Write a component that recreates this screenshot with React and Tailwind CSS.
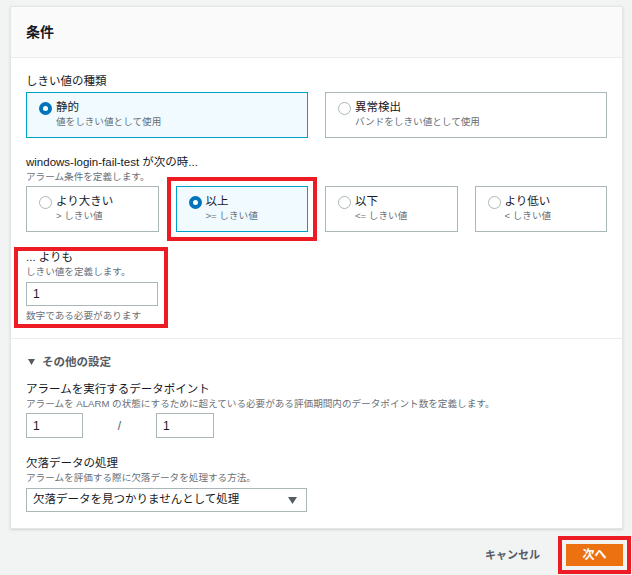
import React from 'react';

// --- Radio dot used in the tiles ---
const Radio = ({ checked }) =>
    checked ? (
        <span className="mt-[3px] flex h-[13px] w-[13px] shrink-0 items-center justify-center rounded-full bg-[#0073bb]">
            <span className="h-[5px] w-[5px] rounded-full bg-white"></span>
        </span>
    ) : (
        <span className="mt-[3px] h-[13px] w-[13px] shrink-0 rounded-full border border-[#aab7b8] bg-white"></span>
    );

// --- Selectable tile ---
const Tile = ({ title, sub, checked, highlight }) => (
    <div
        className={
            'flex h-[46px] items-start gap-[4px] border pl-[12px] pt-[6px] ' +
            (checked ? 'border-[#00a1c9] bg-[#f1faff] ' : 'border-[#aab7b8] bg-white ') +
            (highlight ? 'outline-4 outline-[#ed1c24] outline-offset-[5px]' : '')
        }
    >
        <Radio checked={checked} />
        <div>
            <p className="text-[11.5px] leading-[16px] text-[#16191f]">{title}</p>
            <p className="text-[9.6px] leading-[13px] text-[#687078]">{sub}</p>
        </div>
    </div>
);

const Label = ({ title, sub }) => (
    <div>
        <p className="text-[11.5px] leading-[16px] text-[#16191f]">{title}</p>
        {sub && <p className="text-[9.6px] leading-[13px] text-[#687078]">{sub}</p>}
    </div>
);

const Input = ({ value, className }) => (
    <div className={'flex items-center border border-[#aab7b8] bg-white px-[6px] text-[12px] text-[#16191f] ' + className}>
        {value}
    </div>
);

const App = () => {
    const operators = [
        { title: 'より大きい', sub: '> しきい値' },
        { title: '以上', sub: '>= しきい値', checked: true, highlight: true },
        { title: '以下', sub: '<= しきい値' },
        { title: 'より低い', sub: '< しきい値' },
    ];

    return (
        <div
            className="min-h-[575px] w-[632px] bg-[#f2f3f3] pt-[6px]"
            style={{ fontFamily: '"Liberation Sans", "Noto Sans CJK JP", sans-serif' }}
        >
            <div className="ml-[10px] w-[613px] border border-[#e3e6e6] bg-white shadow-sm">
                <header className="flex h-[51px] items-center border-b border-[#eaeded] bg-[#fafafa] px-[15px]">
                    <h2 className="text-[14px] font-bold text-[#16191f]">条件</h2>
                </header>

                {/* threshold section */}
                <div className="border-b border-[#eaeded] px-[15px] pb-[16px] pt-[14px]">
                    <p className="text-[11.5px] leading-[18px] text-[#16191f]">しきい値の種類</p>
                    <div className="mt-[2px] grid grid-cols-2 gap-[17px]">
                        <Tile title="静的" sub="値をしきい値として使用" checked />
                        <Tile title="異常検出" sub="バンドをしきい値として使用" />
                    </div>

                    <div className="mt-[16px]">
                        <Label title="windows-login-fail-test が次の時..." sub="アラーム条件を定義します。" />
                    </div>
                    <div className="mt-[3px] grid grid-cols-4 gap-[17px]">
                        {operators.map(op => (
                            <Tile key={op.title} {...op} />
                        ))}
                    </div>

                    <div className="relative mt-[17px] w-[132px]">
                        <span className="pointer-events-none absolute -bottom-[6px] -left-[12px] -right-[10px] -top-[2px] border-4 border-[#ed1c24]"></span>
                        <Label title="... よりも" sub="しきい値を定義します。" />
                        <Input value="1" className="mt-[4px] h-[24px] w-[132px]" />
                        <p className="mt-[3px] text-[9.6px] leading-[13px] text-[#687078]">数字である必要があります</p>
                    </div>
                </div>

                {/* additional settings */}
                <div className="px-[15px] pb-[16px] pt-[15px]">
                    <div className="flex items-center gap-[7px] pl-[2px]">
                        <svg width="7" height="6" viewBox="0 0 7 6">
                            <polygon points="0,0 7,0 3.5,6" fill="#545b64" />
                        </svg>
                        <span className="text-[11.5px] font-bold leading-[16px] text-[#545b64]">その他の設定</span>
                    </div>

                    <div className="mt-[11px]">
                        <Label
                            title="アラームを実行するデータポイント"
                            sub="アラームを ALARM の状態にするために超えている必要がある評価期間内のデータポイント数を定義します。"
                        />
                    </div>
                    <div className="mt-[3px] flex items-center">
                        <Input value="1" className="h-[25px] w-[57px]" />
                        <span className="w-[73px] text-center text-[12px] text-[#545b64]">/</span>
                        <Input value="1" className="h-[25px] w-[58px]" />
                    </div>

                    <div className="mt-[17px]">
                        <Label title="欠落データの処理" sub="アラームを評価する際に欠落データを処理する方法。" />
                    </div>
                    <div className="mt-[4px] flex h-[24px] w-[281px] items-center justify-between border border-[#aab7b8] bg-white pl-[6px] pr-[9px]">
                        <span className="text-[11.5px] text-[#16191f]">欠落データを見つかりませんとして処理</span>
                        <svg width="9" height="7" viewBox="0 0 9 7">
                            <polygon points="0,0 9,0 4.5,7" fill="#545b64" />
                        </svg>
                    </div>
                </div>
            </div>

            <footer className="mt-[15px] flex w-[623px] items-center justify-end gap-[26px]">
                <button className="text-[11px] font-bold text-[#545b64]">キャンセル</button>
                <button className="h-[22px] w-[57px] bg-[#ec7211] text-[12px] font-bold text-white outline-4 outline-[#ed1c24] outline-offset-[4px]">
                    次へ
                </button>
            </footer>
        </div>
    );
};

export default App;
